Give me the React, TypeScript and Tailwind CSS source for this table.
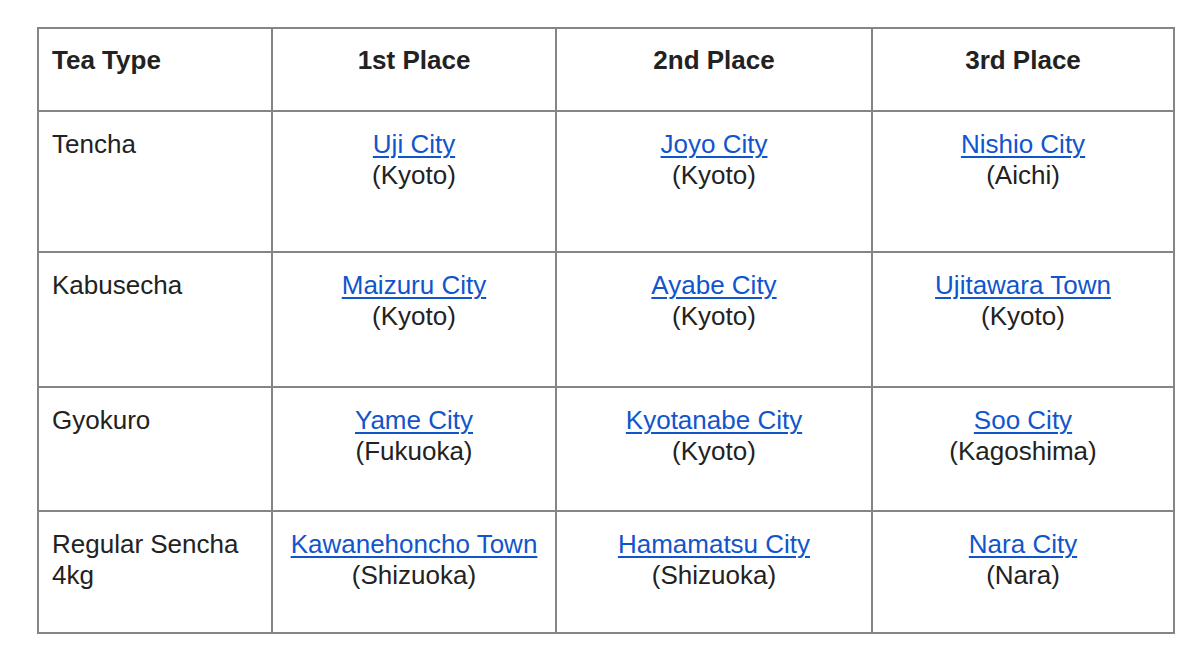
import React from "react";

type Place = { city: string; region: string };

const rows: { tea: string; height: string; places: Place[] }[] = [
  {
    tea: "Tencha",
    height: "h-[141px]",
    places: [
      { city: "Uji City", region: "(Kyoto)" },
      { city: "Joyo City", region: "(Kyoto)" },
      { city: "Nishio City", region: "(Aichi)" },
    ],
  },
  {
    tea: "Kabusecha",
    height: "h-[135px]",
    places: [
      { city: "Maizuru City", region: "(Kyoto)" },
      { city: "Ayabe City", region: "(Kyoto)" },
      { city: "Ujitawara Town", region: "(Kyoto)" },
    ],
  },
  {
    tea: "Gyokuro",
    height: "h-[124px]",
    places: [
      { city: "Yame City", region: "(Fukuoka)" },
      { city: "Kyotanabe City", region: "(Kyoto)" },
      { city: "Soo City", region: "(Kagoshima)" },
    ],
  },
  {
    tea: "Regular Sencha 4kg",
    height: "h-[122px]",
    places: [
      { city: "Kawanehoncho Town", region: "(Shizuoka)" },
      { city: "Hamamatsu City", region: "(Shizuoka)" },
      { city: "Nara City", region: "(Nara)" },
    ],
  },
];

const cell = "border-r-2 border-b-2 border-[#858585] px-[13px]";

const App: React.FC = () => {
  return (
    <div
      className="min-h-screen bg-white pl-[37px] pt-[27px] text-[26px] leading-[31px] text-[#222]"
      style={{ fontFamily: '"Liberation Sans", Arial, sans-serif' }}
    >
      <div className="grid w-fit grid-cols-[234px_284px_316px_302px] border-l-2 border-t-2 border-[#858585]">
        {/* Header */}
        <div className={`${cell} h-[83px] pt-[16px] font-bold`}>Tea Type</div>
        <div className={`${cell} h-[83px] pt-[16px] font-bold text-center`}>1st Place</div>
        <div className={`${cell} h-[83px] pt-[16px] font-bold text-center`}>2nd Place</div>
        <div className={`${cell} h-[83px] pt-[16px] font-bold text-center`}>3rd Place</div>

        {rows.map((row) => (
          <React.Fragment key={row.tea}>
            <div className={`${cell} ${row.height} pt-[17px]`}>{row.tea}</div>
            {row.places.map((p) => (
              <div key={p.city} className={`${cell} ${row.height} pt-[17px] text-center`}>
                <a href="#" className="text-[#1155cc] underline underline-offset-[3px] decoration-[2px]">
                  {p.city}
                </a>
                <div>{p.region}</div>
              </div>
            ))}
          </React.Fragment>
        ))}
      </div>
    </div>
  );
};

export default App;
